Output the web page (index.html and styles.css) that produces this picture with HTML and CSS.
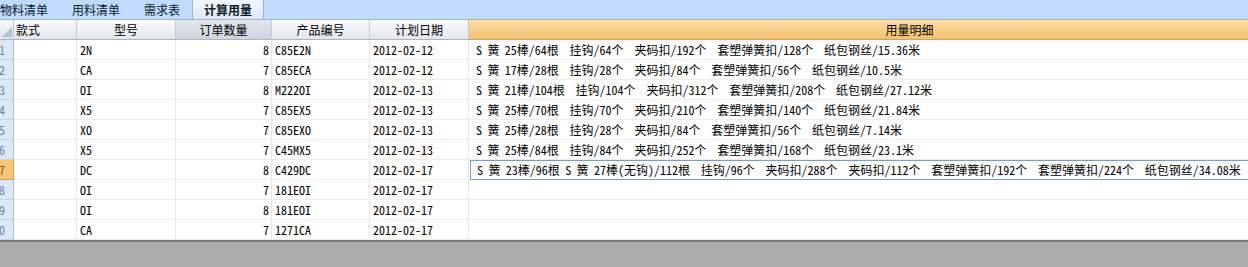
FILE: index.html
```html
<!DOCTYPE html>
<html lang="zh">
<head>
    <meta charset="UTF-8">
    <title>计算用量</title>
    <link rel="stylesheet" href="styles.css">
</head>
<body>
    <div class="tabs">
        <span class="tab">物料清单</span>
        <span class="tab">用料清单</span>
        <span class="tab">需求表</span>
        <span class="tab active">计算用量</span>
    </div>

    <div class="sheet">
        <div class="row head">
            <div class="corner"><i></i></div>
            <div class="hc left">款式</div>
            <div class="hc">型号</div>
            <div class="hc sel">订单数量</div>
            <div class="hc">产品编号</div>
            <div class="hc">计划日期</div>
            <div class="hc detail-head"><span>用量明细</span></div>
        </div>

        <div class="row">
            <div class="rh"><span>1</span></div>
            <div class="c"></div>
            <div class="c">2N</div>
            <div class="c num">8</div>
            <div class="c">C85E2N</div>
            <div class="c">2012-02-12</div>
            <div class="c detail">S 簧 25棒/64根  挂钩/64个  夹码扣/192个  套塑弹簧扣/128个  纸包钢丝/15.36米</div>
        </div>
        <div class="row">
            <div class="rh"><span>2</span></div>
            <div class="c"></div>
            <div class="c">CA</div>
            <div class="c num">7</div>
            <div class="c">C85ECA</div>
            <div class="c">2012-02-12</div>
            <div class="c detail">S 簧 17棒/28根  挂钩/28个  夹码扣/84个  套塑弹簧扣/56个  纸包钢丝/10.5米</div>
        </div>
        <div class="row">
            <div class="rh"><span>3</span></div>
            <div class="c"></div>
            <div class="c">OI</div>
            <div class="c num">8</div>
            <div class="c">M222OI</div>
            <div class="c">2012-02-13</div>
            <div class="c detail">S 簧 21棒/104根  挂钩/104个  夹码扣/312个  套塑弹簧扣/208个  纸包钢丝/27.12米</div>
        </div>
        <div class="row">
            <div class="rh"><span>4</span></div>
            <div class="c"></div>
            <div class="c">X5</div>
            <div class="c num">7</div>
            <div class="c">C85EX5</div>
            <div class="c">2012-02-13</div>
            <div class="c detail">S 簧 25棒/70根  挂钩/70个  夹码扣/210个  套塑弹簧扣/140个  纸包钢丝/21.84米</div>
        </div>
        <div class="row">
            <div class="rh"><span>5</span></div>
            <div class="c"></div>
            <div class="c">XO</div>
            <div class="c num">7</div>
            <div class="c">C85EXO</div>
            <div class="c">2012-02-13</div>
            <div class="c detail">S 簧 25棒/28根  挂钩/28个  夹码扣/84个  套塑弹簧扣/56个  纸包钢丝/7.14米</div>
        </div>
        <div class="row">
            <div class="rh"><span>6</span></div>
            <div class="c"></div>
            <div class="c">X5</div>
            <div class="c num">7</div>
            <div class="c">C45MX5</div>
            <div class="c">2012-02-13</div>
            <div class="c detail">S 簧 25棒/84根  挂钩/84个  夹码扣/252个  套塑弹簧扣/168个  纸包钢丝/23.1米</div>
        </div>
        <div class="row">
            <div class="rh cur"><span>7</span></div>
            <div class="c"></div>
            <div class="c">DC</div>
            <div class="c num">8</div>
            <div class="c">C429DC</div>
            <div class="c">2012-02-17</div>
            <div class="c detail editing">S 簧 23棒/96根 S 簧 27棒(无钩)/112根  挂钩/96个  夹码扣/288个  夹码扣/112个  套塑弹簧扣/192个  套塑弹簧扣/224个  纸包钢丝/34.08米  纸</div>
        </div>
        <div class="row">
            <div class="rh"><span>8</span></div>
            <div class="c"></div>
            <div class="c">OI</div>
            <div class="c num">7</div>
            <div class="c">181EOI</div>
            <div class="c">2012-02-17</div>
            <div class="c detail"></div>
        </div>
        <div class="row">
            <div class="rh"><span>9</span></div>
            <div class="c"></div>
            <div class="c">OI</div>
            <div class="c num">8</div>
            <div class="c">181EOI</div>
            <div class="c">2012-02-17</div>
            <div class="c detail"></div>
        </div>
        <div class="row">
            <div class="rh"><span>10</span></div>
            <div class="c"></div>
            <div class="c">CA</div>
            <div class="c num">7</div>
            <div class="c">1271CA</div>
            <div class="c">2012-02-17</div>
            <div class="c detail"></div>
        </div>
    </div>

    <div class="bottom"></div>
</body>
</html>
```

FILE: styles.css
```css
*{
    margin: 0;
    padding: 0;
    box-sizing: border-box;
}
body{
    width: 1248px;
    height: 267px;
    overflow: hidden;
    background-color: #ffffff;
    font-family: "Noto Sans Mono CJK SC", "Liberation Mono", "Noto Sans CJK SC", monospace;
    font-size: 12px;
    color: #000;
}

/* tab strip */
.tabs{
    height: 20px;
    background-color: #bfdbff;
    border-bottom: 1px solid #a9b3bf;
    display: flex;
    margin-left: -12px;
    font-family: "Noto Sans CJK SC", sans-serif;
}
.tab{
    padding: 0 12px;
    line-height: 19px;
    color: #0c1a2a;
}
.tab.active{
    font-weight: bold;
    background: linear-gradient(#f2f7fe, #dbe8f8);
    border-left: 1px solid #9fb4cc;
    border-right: 1px solid #9fb4cc;
    padding: 0 11px;
}

/* grid */
.sheet{
    width: 1248px;
    overflow: hidden;
}
.row{
    display: grid;
    grid-template-columns: 14px 63px 99px 96px 98px 99px 882px;
    height: 20px;
    width: 1351px;
}
.head{
    font-family: "Noto Sans CJK SC", sans-serif;
}
.corner{
    background: linear-gradient(#f6f8fb, #dfe5ee);
    border-right: 1px solid #b9c4d2;
    border-bottom: 1px solid #a9b5c4;
    position: relative;
}
.corner i{
    position: absolute;
    right: 1px;
    bottom: 2px;
    border-style: solid;
    border-width: 0 0 10px 10px;
    border-color: transparent transparent #b4c2d4 transparent;
}
.hc{
    background: linear-gradient(#f9fafc, #e3e7ed);
    border-right: 1px solid #c2c9d3;
    border-bottom: 1px solid #a9b5c4;
    text-align: center;
    line-height: 19px;
    white-space: nowrap;
}
.hc.left{
    text-align: left;
    padding-left: 2px;
}
.hc.sel{
    background: linear-gradient(#e3e7ed, #cfd5de);
}
.detail-head{
    background: linear-gradient(#fbdfa8, #f3c16e);
    border-bottom: 1px solid #d9a24c;
}

.rh{
    background-color: #dde8f5;
    border-right: 1px solid #a8bbd3;
    border-bottom: 1px solid #c3d2e4;
    overflow: hidden;
    line-height: 19px;
    color: #6d84a3;
}
.rh span{
    display: block;
    width: 20px;
    margin-left: -15px;
    text-align: right;
}
.rh.cur{
    background-color: #f8c77a;
    border-color: #e09b3c;
    color: #8a5a1c;
}

.c{
    border-right: 1px solid #e6e6e6;
    border-bottom: 1px solid #ececec;
    line-height: 19px;
    padding-left: 3px;
    white-space: pre;
    overflow: hidden;
}
.c.num{
    text-align: right;
    padding-right: 2px;
}
.c.detail{
    padding-left: 7px;
    word-spacing: -0.6px;
}
.c.editing{
    border: 1px solid #6f9fd6;
    margin-left: 1px;
    padding-left: 6px;
    line-height: 18px;
}

.bottom{
    height: 27px;
    background-color: #ababab;
    border-top: 2px solid #7d7d7d;
}
```
